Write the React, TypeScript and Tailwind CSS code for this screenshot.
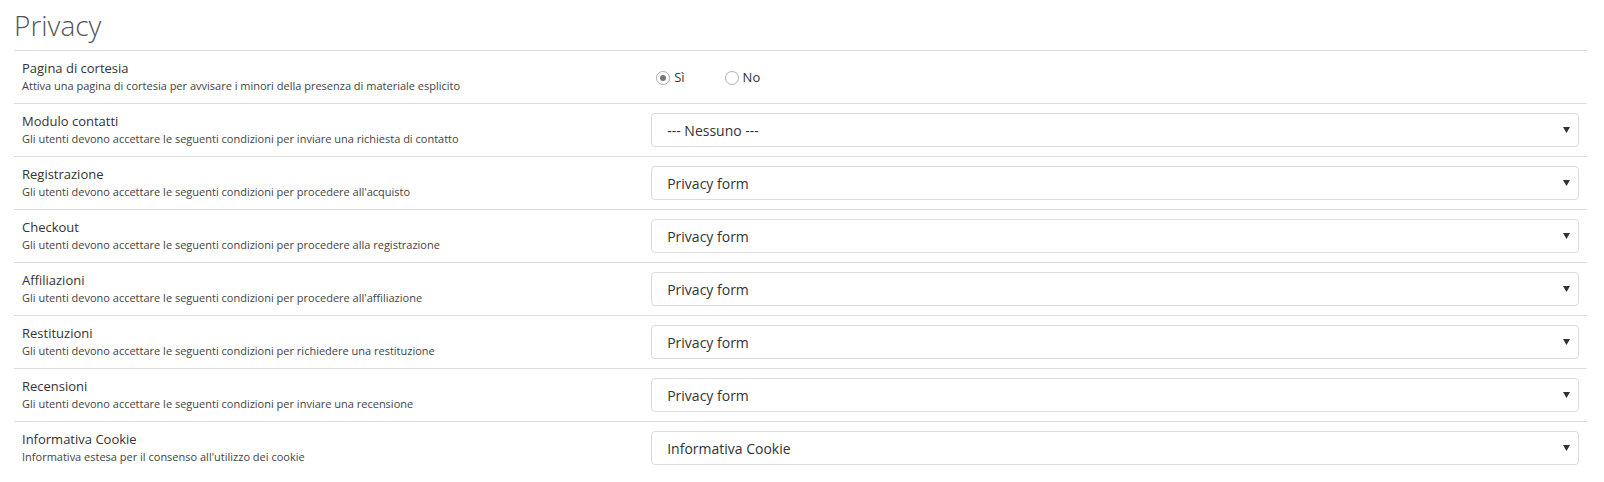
import React from "react";

const rows: { label: string; desc: string; value?: string }[] = [
  { label: "Pagina di cortesia", desc: "Attiva una pagina di cortesia per avvisare i minori della presenza di materiale esplicito" },
  { label: "Modulo contatti", desc: "Gli utenti devono accettare le seguenti condizioni per inviare una richiesta di contatto", value: "--- Nessuno ---" },
  { label: "Registrazione", desc: "Gli utenti devono accettare le seguenti condizioni per procedere all'acquisto", value: "Privacy form" },
  { label: "Checkout", desc: "Gli utenti devono accettare le seguenti condizioni per procedere alla registrazione", value: "Privacy form" },
  { label: "Affiliazioni", desc: "Gli utenti devono accettare le seguenti condizioni per procedere all'affiliazione", value: "Privacy form" },
  { label: "Restituzioni", desc: "Gli utenti devono accettare le seguenti condizioni per richiedere una restituzione", value: "Privacy form" },
  { label: "Recensioni", desc: "Gli utenti devono accettare le seguenti condizioni per inviare una recensione", value: "Privacy form" },
  { label: "Informativa Cookie", desc: "Informativa estesa per il consenso all'utilizzo dei cookie", value: "Informativa Cookie" },
];

function Radio({ checked, label }: { checked?: boolean; label: string }) {
  return (
    <label className="flex items-center gap-[4px] text-[13px] text-[#333]">
      <span className="w-[14px] h-[14px] rounded-full border border-[#b0b0b0] bg-white flex items-center justify-center">
        {checked && <span className="w-[6px] h-[6px] rounded-full bg-[#777]" />}
      </span>
      <span>{label}</span>
    </label>
  );
}

function Select({ value }: { value: string }) {
  return (
    <div className="h-[34px] w-full rounded-[4px] border border-[#dcdcdc] bg-white flex items-center justify-between pl-[15px] pr-[8px] text-[14px] text-[#333]">
      <span>{value}</span>
      <svg width="7" height="6" viewBox="0 0 7 6">
        <polygon points="0,0 7,0 3.5,6" fill="#333" />
      </svg>
    </div>
  );
}

export default function App() {
  return (
    <div className="bg-white min-h-[482px] pl-[14px] pr-[17px]" style={{ fontFamily: '"Open Sans", "Noto Sans", sans-serif' }}>
      <h1 className="pt-[8px] pb-[8px] text-[28px] leading-[34px] font-light text-[#555]">Privacy</h1>
      <div>
        {rows.map((r, i) => (
          <div key={i} className="flex border-t border-[#dddddd]">
            <div className="w-[40%] px-[8px] py-[9px]">
              <div className="text-[13px] leading-[16px] text-[#333]">{r.label}</div>
              <div className="mt-[2px] text-[11px] leading-[16px] text-[#444]">{r.desc}</div>
            </div>
            <div className="w-[60%] px-[8px] py-[9px] flex items-center">
              {r.value ? (
                <Select value={r.value} />
              ) : (
                <div className="flex items-center gap-[40px] pl-[5px] pt-[2px]">
                  <Radio checked label="Sì" />
                  <Radio label="No" />
                </div>
              )}
            </div>
          </div>
        ))}
      </div>
    </div>
  );
}
